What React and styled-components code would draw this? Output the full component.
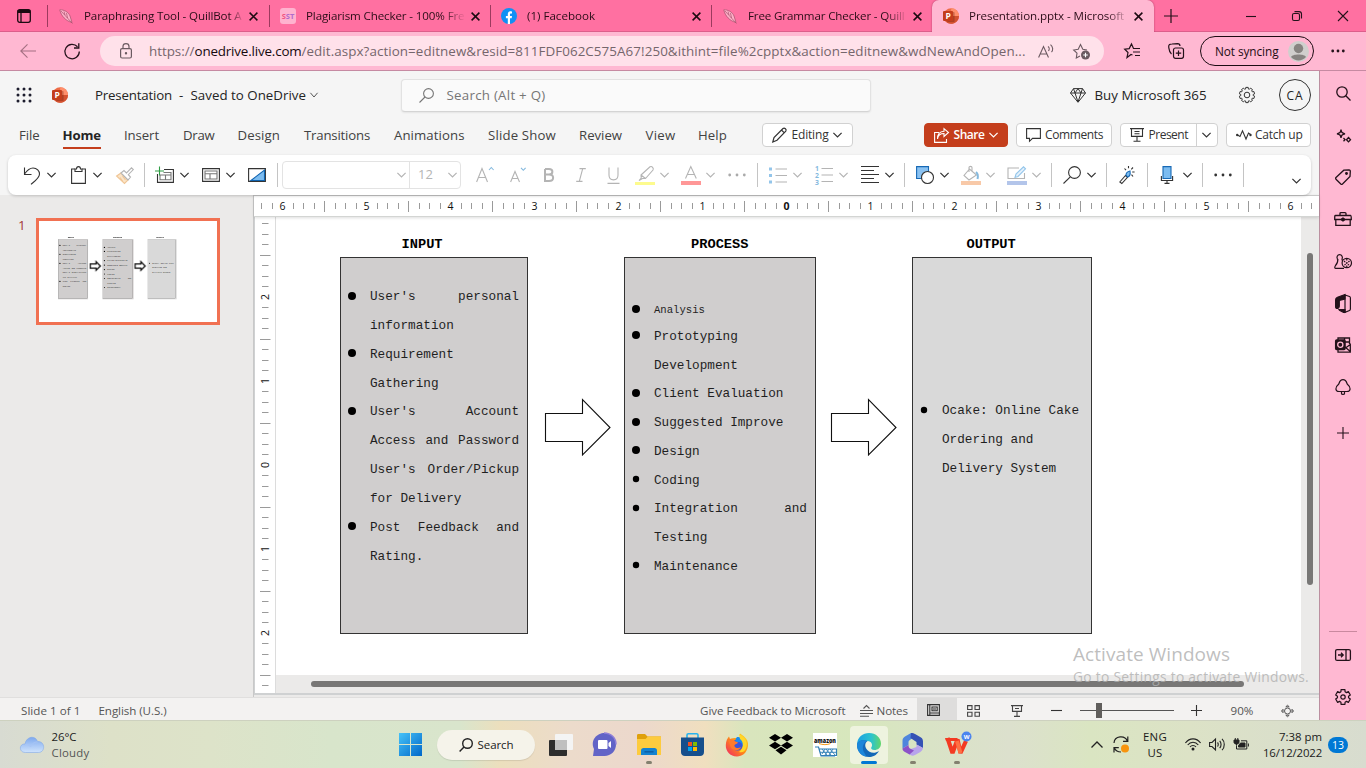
import React from "react";
import styled, { createGlobalStyle } from "styled-components";

const FAMILY = '"Open Sans", "Noto Sans", sans-serif';

const Global = createGlobalStyle`
  * { box-sizing: border-box; }
  body { margin: 0; overflow: hidden; font-family: ${FAMILY}; color: #242424; }
  svg { display: block; flex: none; overflow: visible; }
`;

/* ---------- text with a fixed run width ---------- */
const ctx = document.createElement("canvas").getContext("2d");
const tracking = (text, size, weight, width) => {
  ctx.font = `${weight} ${size}px ${FAMILY}`;
  return (width - ctx.measureText(text).width) / text.length;
};

const Run = styled.span`
  display: block;
  flex: none;
  white-space: pre;
  font-size: ${(p) => p.$size}px;
  font-weight: ${(p) => p.$weight};
  color: ${(p) => p.$color || "inherit"};
  letter-spacing: ${(p) => p.$track}px;
  width: ${(p) => p.$width}px;
  margin-left: ${(p) => p.$ml || 0}px;
  line-height: 1.36;
`;

function Label({ children, w, size = 12.8, weight = 400, color, ml }) {
  return (
    <Run $size={size} $weight={weight} $color={color} $ml={ml} $width={w} $track={tracking(children, size, weight, w)}>
      {children}
    </Run>
  );
}

/* ---------- shared pieces ---------- */
const Slot = styled.div`
  flex: none;
  display: flex;
  align-items: center;
  justify-content: center;
  width: ${(p) => p.$w}px;
  margin-left: ${(p) => p.$ml || 0}px;
  margin-top: ${(p) => p.$mt || 0}px;
`;

const Spacer = styled.div`
  flex: 1;
`;

function Icon({ w = 18, h, s = "#333", sw = 1.1, f = "none", children, ...rest }) {
  return (
    <svg width={w} height={h || w} viewBox={`0 0 ${w} ${h || w}`} fill={f} stroke={s} strokeWidth={sw} {...rest}>
      {children}
    </svg>
  );
}

const Chevron = ({ c = "#333", w = 9, sw = 1.2 }) => (
  <Icon w={w} h={6} s={c} sw={sw}>
    <path d={`M.4 .8 L${w / 2} 5 L${w - 0.4} .8`} />
  </Icon>
);

const PowerPoint = () => (
  <svg width="16" height="16" viewBox="0 0 16 16">
    <circle cx="8.2" cy="8" r="7.8" fill="#ed6c47" />
    <path d="M8.2 .2 A7.8 7.8 0 0 1 16 8 H8.2Z" fill="#ff8f6b" />
    <path d="M16 8 A7.8 7.8 0 0 1 .8 10.5 L8.2 8Z" fill="#d35230" />
    <rect x="4" y="4" width="7.6" height="10" rx="1" fill="#6e1f0d" opacity=".35" />
    <rect x="0" y="3" width="10" height="10" rx="1" fill="#c43e1c" />
    <text x="2.6" y="11" fontSize="8.5" fontWeight="700" fill="#fff" fontFamily="Open Sans, sans-serif">P</text>
  </svg>
);

const Feather = () => (
  <Icon w={15} h={15} s="#a5506c" sw={0.7} f="#ffb0c8">
    <path d="M.8 .8 C5 .6 9.500 3 11 7 L13 13.500 C7 12 2 7 .8 .8Z" />
    <path d="M2 2 L13.500 14.500 M5 2.500 L6 6 M7.500 4 L8.500 9" fill="none" />
  </Icon>
);

const Facebook = () => (
  <svg width="16" height="16" viewBox="0 0 16 16">
    <circle cx="8" cy="8" r="8" fill="#1090f5" />
    <path d="M6.800 16 V10.300 H4.900 V8 H6.800 V6.400 C6.800 4.300 8 3.300 9.700 3.300 L11 3.400 V5.400 H10 C9.200 5.400 9 5.900 9 6.500 V8 H11 L10.700 10.300 H9 V16Z" fill="#fff" />
  </svg>
);

const SstBox = styled.div`
  width: 16px;
  height: 16px;
  border-radius: 3px;
  background: #ffb3cf;
  color: #f0567f;
  font-size: 7.5px;
  font-weight: 700;
  line-height: 16px;
  text-align: center;
  span { color: #b06ccb; }
`;

/* ---------- browser chrome ---------- */
const Page = styled.div`
  width: 1366px;
  height: 768px;
  display: flex;
  flex-direction: column;
  overflow: hidden;
`;

const TabBar = styled.div`
  height: 32px;
  flex: none;
  display: flex;
  align-items: stretch;
  background: #ff70a1;
  border-bottom: 1px solid #dc5f8b;
`;

const Workspaces = styled.div`
  width: 47px;
  flex: none;
  display: flex;
  align-items: center;
  padding-left: 17px;
`;

const TabBox = styled.div`
  width: ${(p) => p.$w || 221}px;
  flex: none;
  display: flex;
  align-items: center;
  padding-left: ${(p) => (p.$active ? 11 : 10)}px;
  height: 32px;
  border-left: ${(p) => (p.$active ? 0 : 1)}px solid transparent;
  border-image: ${(p) => (p.$active ? "none" : "linear-gradient(#0000 6px, #9c3a5e 6px, #9c3a5e 26px, #0000 26px) 1")};
  background: ${(p) => (p.$active ? "#ffb8d2" : "transparent")};
  border-radius: ${(p) => (p.$active ? "7px 7px 0 0" : 0)};
  box-shadow: ${(p) => (p.$active ? "0 0 2px #a83b62" : "none")};
  color: #2b0d18;
`;

const TabTitle = styled.div`
  width: ${(p) => p.$w}px;
  flex: none;
  margin-left: 10px;
  overflow: hidden;
  mask-image: linear-gradient(90deg, #000 ${(p) => p.$fade}px, transparent 160px);
`;

const CloseX = () => (
  <Icon w={9} s="#1c0a11" sw={1.5}>
    <path d="M.6 .6 L8.400 8.400 M8.400 .6 L.6 8.400" />
  </Icon>
);

function Tab({ icon, title, w, active, boxWidth = 221, fade = 138 }) {
  return (
    <TabBox $active={active} $w={boxWidth}>
      <Slot $w={16}>{icon}</Slot>
      <TabTitle $fade={fade} $w={159}>
        <Label w={w} size={11.6}>{title}</Label>
      </TabTitle>
      <Slot $w={9} $ml={6}><CloseX /></Slot>
    </TabBox>
  );
}

const AddressBar = styled.div`
  height: 39px;
  flex: none;
  display: flex;
  align-items: center;
  background: #ffb8d2;
  border-bottom: 1px solid #c68aa2;
`;

const UrlField = styled.div`
  width: 1004px;
  height: 30px;
  margin-left: 20px;
  border-radius: 15px;
  background: #ffe1ea;
  display: flex;
  align-items: center;
  padding-left: 20px;
  color: #75666c;
`;

const Profile = styled.div`
  width: 114px;
  height: 30px;
  margin-left: 16px;
  border: 1.3px solid #1d0c13;
  border-radius: 15px;
  display: flex;
  align-items: center;
  padding-left: 14px;
`;

/* ---------- office shell ---------- */
const Body = styled.div`
  flex: 1;
  display: flex;
  min-height: 0;
`;

const Office = styled.div`
  width: 1320px;
  flex: none;
  display: flex;
  flex-direction: column;
  background: #f5f5f5;
  border-right: 1px solid #bb8fa0;
`;

const Header = styled.div`
  height: 48px;
  flex: none;
  display: flex;
  align-items: center;
`;

const SearchBox = styled.div`
  width: 470px;
  height: 33px;
  flex: none;
  margin-left: 83px;
  border: 1px solid #e2e2e2;
  border-bottom-color: #d4d4d4;
  border-radius: 4px;
  background: #fafafa;
  display: flex;
  align-items: center;
  padding-left: 17px;
  color: #767676;
  box-shadow: 0 1px 2px #00000012;
`;

const Avatar = styled.div`
  width: 32px;
  height: 32px;
  margin-left: 24px;
  border: 1px solid #333;
  border-radius: 50%;
  display: flex;
  align-items: center;
  justify-content: center;
  padding-top: 2px;
`;

const MenuRow = styled.div`
  height: 32px;
  flex: none;
  display: flex;
  align-items: center;
  color: #424242;
`;

const MenuItem = styled.div`
  margin-left: ${(p) => p.$ml}px;
  padding: 6px 0 3px;
  border-bottom: 2px solid ${(p) => (p.$on ? "#c43e1c" : "transparent")};
  color: ${(p) => (p.$on ? "#242424" : "inherit")};
`;

const PillButton = styled.div`
  width: ${(p) => p.$w}px;
  height: 24px;
  flex: none;
  margin-left: ${(p) => p.$ml}px;
  padding-left: 9px;
  display: flex;
  align-items: center;
  border: 1px solid ${(p) => (p.$primary ? "#c43e1c" : "#d1d1d1")};
  border-radius: 4px;
  background: ${(p) => (p.$primary ? "#c43e1c" : "#fff")};
  color: ${(p) => (p.$primary ? "#fff" : "#333")};
`;

const ButtonDivider = styled.div`
  width: 1px;
  height: 22px;
  background: #d1d1d1;
  margin-left: 8px;
`;

const Ribbon = styled.div`
  width: 1303px;
  height: 40px;
  flex: none;
  margin: 4px 0 0 8px;
  border-radius: 8px;
  background: #fff;
  box-shadow: 0 1px 3px #00000030;
  display: flex;
  align-items: center;
  position: relative;
  z-index: 2;
`;

const Divider = styled.div`
  width: 1px;
  height: 24px;
  flex: none;
  margin-left: ${(p) => p.$ml}px;
  background: #c4c4c4;
`;

const FontPicker = styled.div`
  width: 179px;
  height: 28px;
  margin-left: 4px;
  flex: none;
  border: 1px solid #e3e3e3;
  border-radius: 4px;
  display: flex;
  align-items: center;
  color: #b5b5b5;
`;

const FontName = styled.div`
  width: 127px;
  height: 26px;
  border-right: 1px solid #e3e3e3;
  display: flex;
  align-items: center;
  padding-left: 114px;
`;

/* ---------- editor ---------- */
const Editor = styled.div`
  flex: 1;
  min-height: 0;
  display: flex;
  background: #ebeae9;
`;

const ThumbPane = styled.div`
  width: 254px;
  flex: none;
  display: flex;
  align-items: flex-start;
  border-right: 1px solid #c8c8c8;
  color: #a4373a;
  padding: 21px 0 0 18px;
`;

const Thumb = styled.div`
  width: 184px;
  height: 107px;
  margin: 2px 0 0 10px;
  border: 3px solid #f17152;
  background: #fff;
  overflow: hidden;
  padding: 12px 0 0 9px;
`;

const Miniature = styled.div`
  width: 820px;
  transform: scale(0.1567);
  transform-origin: 0 0;
  svg { stroke-width: 8px; }
`;

const Workspace = styled.div`
  flex: 1;
  min-width: 0;
  display: flex;
  flex-direction: column;
`;

const TopRuler = styled.div`
  height: 22px;
  flex: none;
  background: #fff;
  border-top: 1px solid #c9c9c9;
  border-bottom: 1px solid #d3d5d3;
  overflow: hidden;
  position: relative;
  box-shadow: 0 1px 3px #00000022;
`;

const CanvasRow = styled.div`
  flex: 1;
  min-height: 0;
  display: flex;
  border-bottom: 2px solid #cfd1d2;
`;

const LeftRuler = styled.div`
  width: 22px;
  flex: none;
  background: #fff;
  border-left: 1px solid #cfd1d2;
  border-right: 1px solid #dcdcdc;
  overflow: hidden;
`;

const CanvasColumn = styled.div`
  flex: 1;
  min-width: 0;
`;

const Canvas = styled.div`
  width: 1025px;
  height: 458px;
  background: #fff;
  overflow: hidden;
`;

const HTrack = styled.div`
  padding: 6px 0 0 35px;
`;

const HThumb = styled.div`
  width: 933px;
  height: 6px;
  border-radius: 3px;
  background: #787776;
`;

const VTrack = styled.div`
  width: 18px;
  flex: none;
  padding: 36px 0 0 6px;
`;

const VThumb = styled.div`
  width: 6px;
  height: 332px;
  border-radius: 3px;
  background: #787776;
`;

const CanvasSplit = styled.div`
  display: flex;
  flex: 1;
`;

/* ---------- slide ---------- */
const SlideArea = styled.div`
  position: relative;
  width: 820px;
  height: 458px;
  font-family: "Liberation Mono", monospace;
`;

const Caption = styled.div`
  position: absolute;
  left: ${(p) => p.$x}px;
  top: 20px;
  font: bold 13.7px/15px "Liberation Mono", monospace;
  color: #000;
`;

const Panel = styled.div`
  position: absolute;
  left: ${(p) => p.$x}px;
  top: 40px;
  width: ${(p) => p.$w}px;
  height: 377px;
  padding-top: ${(p) => p.$pt}px;
  border: 1px solid #333;
  background: ${(p) => p.$bg || "#d0cece"};
`;

const Line = styled.div`
  height: ${(p) => p.$h || 28.85}px;
  display: flex;
  align-items: center;
  font-size: ${(p) => p.$size || 12.7}px;
  color: #1f1f1f;
`;

const Bullet = styled.span`
  width: 8px;
  height: 8px;
  margin: 0 14px 2px 7px;
  flex: none;
  border-radius: 50%;
  background: ${(p) => (p.$on ? "#000" : "transparent")};
  transform: scale(${(p) => (p.$small ? 0.8 : 1)});
`;

const Words = styled.span`
  width: ${(p) => p.$w}px;
  white-space: nowrap;
  text-align-last: ${(p) => (p.$wide ? "justify" : "left")};
`;

const BlockArrow = styled.svg`
  position: absolute;
  left: ${(p) => p.$x}px;
  top: 181px;
  stroke-width: 1.1px;
`;

const INPUT = [
  ["User's personal", 1, 1], ["information"], ["Requirement", 1], ["Gathering"], ["User's Account", 1, 1],
  ["Access and Password", 0, 1], ["User's Order/Pickup", 0, 1], ["for Delivery"], ["Post Feedback and", 1, 1], ["Rating."],
];
const PROCESS = [
  ["Analysis", 1, 0, 24.2, 10.6], ["Prototyping", 1], ["Development"], ["Client Evaluation", 1], ["Suggested Improve", 1],
  ["Design", 1], ["Coding", 2], ["Integration and", 2, 1], ["Testing"], ["Maintenance", 2],
];
const OUTPUT = [["Ocake: Online Cake", 2], ["Ordering and"], ["Delivery System"]];

function Lines({ rows, w, step }) {
  return rows.map(([text, dot, wide, h, size]) => (
    <Line key={text} $h={h || step} $size={size}>
      <Bullet $on={!!dot} $small={dot === 2} />
      <Words $w={w} $wide={wide}>{text}</Words>
    </Line>
  ));
}

function Slide() {
  return (
    <SlideArea>
      <Caption $x={125.5}>INPUT</Caption>
      <Caption $x={415}>PROCESS</Caption>
      <Caption $x={690.5}>OUTPUT</Caption>
      <Panel $x={64} $w={188} $pt={24.1}><Lines rows={INPUT} w={149} step={28.87} /></Panel>
      <Panel $x={348} $w={192} $pt={39.8}><Lines rows={PROCESS} w={153} step={28.75} /></Panel>
      <Panel $x={636} $w={180} $pt={138.4} $bg="#d9d9d9"><Lines rows={OUTPUT} w={140} /></Panel>
      {[269, 555].map((x) => (
        <BlockArrow key={x} $x={x} width="66" height="58" viewBox="0 0 66 58" fill="#fff" stroke="#111">
          <path d="M.5 15.500 H37.500 V1.500 L65 29.500 L37.500 57 V43.500 H.5Z" />
        </BlockArrow>
      ))}
    </SlideArea>
  );
}

/* ---------- rulers ---------- */
function HorizontalRuler() {
  const marks = [];
  for (let i = -50; i <= 50; i++) {
    const x = 532.5 + i * 10.5;
    if (x < 4 || x > 1064) continue;
    if (i % 8 === 0) marks.push(<text key={i} x={x - 0.1} y="14" textAnchor="middle" fontSize="10.500" fontWeight={i === 0 ? 700 : 500} fill="#111">{Math.abs(i / 8)}</text>);
    else marks.push(<path key={i} d={i % 4 === 0 ? `M${Math.floor(x) + 0.5} 5 V16` : `M${Math.floor(x) + 0.5} 7 V13`} stroke="#9a9a9a" />);
  }
  return <svg width="1065" height="20">{marks}</svg>;
}

function VerticalRuler() {
  const marks = [];
  for (let i = -23; i <= 21; i++) {
    const y = 248 + i * 10.5;
    if (y < 4) continue;
    if (i % 8 === 0) marks.push(<text key={i} transform={`translate(14 ${y}) rotate(-90)`} textAnchor="middle" fontSize="10.500" fontWeight="500" fill="#111">{Math.abs(i / 8)}</text>);
    else marks.push(<path key={i} d={i % 4 === 0 ? `M5 ${Math.floor(y) + 0.5} H15.500` : `M7 ${Math.floor(y) + 0.5} H13.500`} stroke="#9a9a9a" />);
  }
  return <svg width="20" height="476">{marks}</svg>;
}

/* ---------- status bar ---------- */
const StatusBar = styled.div`
  height: 23px;
  flex: none;
  display: flex;
  align-items: center;
  padding-top: 3px;
  background: #f3f2f1;
  border-top: 1px solid #e0dfde;
  color: #555;
  position: relative;
  z-index: 1;
`;

const ViewButton = styled.div`
  width: 40px;
  height: 22px;
  flex: none;
  margin: -3px 0 0 9px;
  background: #dedddc;
  display: flex;
  align-items: center;
  justify-content: center;
  padding: 2px 8px 0 0;
`;

const EditorGap = styled.div`
  height: 2px;
  background: #ebeae9;
`;

/* ---------- browser sidebar ---------- */
const SideBar = styled.div`
  width: 46px;
  flex: none;
  background: #ffb8d2;
  display: flex;
  flex-direction: column;
  align-items: center;
  padding-top: 1px;
`;

const SideSlot = styled.div`
  width: 28px;
  height: 42px;
  display: flex;
  align-items: center;
  justify-content: center;
`;

const SideRule = styled.div`
  width: 28px;
  height: 1px;
  background: #c9899f;
`;

/* ---------- windows taskbar ---------- */
const TaskBar = styled.div`
  height: 48px;
  flex: none;
  display: flex;
  align-items: center;
  border-top: 1px solid #cdd1bf;
  background: linear-gradient(90deg, #d8dbd2 0, #dde1c8 110px, #dde3c9 210px, #d8e5cb 330px, #d9e5cc 460px, #ecdfbd 500px, #ecdbcb 570px, #ecd8cc 640px, #f0dfbf 705px, #d9e5bd 745px, #d7e7bd 860px, #d9e3c6 930px, #dce0cd 1010px, #dae5c2 1090px, #dce2c6 1190px, #d8dccf 1366px);
  position: relative;
`;

const SearchPill = styled.div`
  width: 98px;
  height: 30px;
  margin-left: 14px;
  border-radius: 15px;
  background: #f5f3ea;
  box-shadow: 0 1px 1px #0000001a;
  display: flex;
  align-items: center;
  padding-left: 22px;
  color: #1a1a1a;
`;

const TaskApp = styled.div`
  width: 38px;
  height: 38px;
  flex: none;
  margin-left: ${(p) => p.$ml || 6}px;
  border-radius: 4px;
  background: ${(p) => (p.$active ? "#eef3df" : "transparent")};
  display: flex;
  align-items: center;
  justify-content: center;
  position: relative;
  &::after {
    content: "";
    position: absolute;
    bottom: 0;
    width: ${(p) => (p.$active ? 16 : 6)}px;
    height: 3px;
    border-radius: 2px;
    background: ${(p) => (p.$active ? "#0078d4" : p.$open ? "#83806f" : "transparent")};
  }
`;

const Stack = styled.div`
  width: ${(p) => p.$w}px;
  margin-left: ${(p) => p.$ml}px;
  flex: none;
  display: flex;
  flex-direction: column;
  align-items: ${(p) => p.$align || "flex-start"};
  color: #1b1b1b;
`;

const Badge = styled.div`
  width: 20px;
  height: 16px;
  margin-left: 6px;
  border-radius: 8px;
  background: #0078d4;
  color: #fff;
  font-size: 10.5px;
  line-height: 16px;
  text-align: center;
`;

const Watermark = styled.div`
  position: absolute;
  left: 1073px;
  top: 642px;
  z-index: 5;
  color: #b0b0b0d0;
  pointer-events: none;
`;

const Dots = ({ c = "#333", w = 17 }) => (
  <Icon w={w} h={4} s="none" f={c}>
    <circle cx="1.700" cy="2" r="1.400" /><circle cx={w / 2} cy="2" r="1.400" /><circle cx={w - 1.7} cy="2" r="1.400" />
  </Icon>
);

function RibbonBar() {
  const g = "#b4b4b4";
  return (
    <Ribbon>
      <Slot $w={18} $ml={15}><Icon h={19}><path d="M1.500 1.500 V8.500 H8.500 M1.500 8 C4 4.500 6 2 10 2 C14 2 16.500 5 16.500 8 C16.500 12 12 15 8 18.300" /></Icon></Slot>
      <Slot $w={9} $ml={6}><Chevron /></Slot>
      <Slot $w={15} $ml={15}><Icon w={15} h={18}><path d="M4 3 H.6 V17.400 H14.400 V3 H11" /><path d="M4 5.500 V3 H5.500 C5.500 -.2 9.500 -.2 9.500 3 H11 V5.500Z" /></Icon></Slot>
      <Slot $w={9} $ml={7}><Chevron /></Slot>
      <Slot $w={18} $ml={14}>
        <Icon h={17} s={g}>
          <path d="M.6 9 L5 6 L12 13 L8.500 16.400Z" fill="#fbe5c8" stroke="#f0c595" /><path d="M4 10.500 L6.500 14 M6.500 9 L9.500 13" stroke="#f0c595" />
          <path d="M5 6 L8 3.500 L10.500 6 L15.500 .8 L17.300 2.600 L12.300 7.700 L14.500 10 L12 13Z" fill="#fff" />
        </Icon>
      </Slot>
      <Divider $ml={10} />
      <Slot $w={19} $ml={10}><Icon w={19} h={16}><path d="M9 2.500 H18.400 V15.400 H2.500 V7" /><path d="M8.500 5.500 H16 V12.800 H5 V8 M5 8 H16 M10.500 8 V12.800" stroke="#777" /><path d="M4.500 -.5 V8.500 M0 4 H9" stroke="#2f9e44" /></Icon></Slot>
      <Slot $w={9} $ml={6}><Chevron /></Slot>
      <Slot $w={18} $ml={13}><Icon h={14}><path d="M.6 .6 H17.400 V13.400 H.6Z" /><path d="M3 3 H15 V11 H3Z M3 5.700 H15 M8 5.700 V11" stroke="#777" /></Icon></Slot>
      <Slot $w={9} $ml={6}><Chevron /></Slot>
      <Slot $w={18} $ml={13}><Icon h={14}><path d="M.6 .6 H17.400 V13.400 H.6Z" /><path d="M3 12.500 L16.500 2 V12.500Z" fill="#7cbcf0" stroke="#0f63b0" /></Icon></Slot>
      <Divider $ml={11} />
      <FontPicker>
        <FontName><Chevron c={g} /></FontName>
        <Label w={15} ml={8} size={13}>12</Label>
        <Slot $w={9} $ml={15}><Chevron c={g} /></Slot>
      </FontPicker>
      <Slot $w={18} $ml={15}><Icon h={16} s={g}><path d="M.6 15 L6 1.500 L11.500 15 M2.300 10.500 H9.800" /><path d="M13 3 L15.300 .5 L17.600 3" stroke="#84b9de" /></Icon></Slot>
      <Slot $w={17} $ml={16}><Icon w={17} h={16} s={g}><path d="M.6 15 L5 4.500 L9.500 15 M2.300 11.500 H8" /><path d="M11 .8 L13.300 3.300 L15.600 .8" stroke="#84b9de" /></Icon></Slot>
      <Slot $w={12} $ml={16}><Icon w={12} h={14} s={g} sw={2}><path d="M2 1 H6 C10.500 1 10.500 6.500 6 6.500 H2 M6 6.500 C11.500 6.500 11.500 13 6 13 H2 V1" /></Icon></Slot>
      <Slot $w={10} $ml={21}><Icon w={10} h={14} s={g}><path d="M3.500 .6 H9.800 M.2 13.400 H6.500 M6.700 .6 L3.300 13.400" /></Icon></Slot>
      <Slot $w={13} $ml={21}><Icon w={13} h={17} s={g}><path d="M2 .4 V8 C2 14.500 11 14.500 11 8 V.4 M.5 16.400 H12.500" /></Icon></Slot>
      <Slot $w={20} $ml={15}><Icon w={20} h={19} s={g}><path d="M6 9 L15 .8 C17 -.2 19 2 18 4 L10.500 12.500 H7.500 L4 14.500 L6.200 12Z M6 9 L10.500 12.500" /><path d="M0 17.500 H20" stroke="#fdfb8e" strokeWidth="3" /></Icon></Slot>
      <Slot $w={9} $ml={5}><Chevron c={g} /></Slot>
      <Slot $w={20} $ml={12}><Icon w={20} h={19} s={g}><path d="M4.500 12.500 L9.800 .6 L15.300 12.500 M6.300 8.500 H13.500" /><path d="M0 17 H20" stroke="#ff9797" strokeWidth="4" /></Icon></Slot>
      <Slot $w={9} $ml={5}><Chevron c={g} /></Slot>
      <Slot $w={18} $ml={13}><Dots c="#aaa" w={18} /></Slot>
      <Divider $ml={11} />
      <Slot $w={18} $ml={11}><Icon h={17} s={g}><path d="M6.500 2 H18 M6.500 8.500 H18 M6.500 15 H18" /><path d="M0 2 H3 M0 8.500 H3 M0 15 H3" stroke="#93c5ea" strokeWidth="3" /></Icon></Slot>
      <Slot $w={9} $ml={6}><Chevron c={g} /></Slot>
      <Slot $w={18} $ml={13}>
        <Icon h={18} s={g}><path d="M6.500 2.500 H18 M6.500 9 H18 M6.500 15.500 H18" />
          <g fill="#84b9de" stroke="none" fontSize="6.800" fontWeight="700"><text x="0" y="4.500">1</text><text x="0" y="11.500">2</text><text x="0" y="18.500">3</text></g></Icon>
      </Slot>
      <Slot $w={9} $ml={6}><Chevron c={g} /></Slot>
      <Slot $w={18} $ml={13}><Icon h={18}><path d="M0 .5 H18 M0 4.500 H13 M0 8.500 H18 M0 12.500 H13 M0 16.500 H18" /></Icon></Slot>
      <Slot $w={9} $ml={6}><Chevron /></Slot>
      <Divider $ml={10} />
      <Slot $w={18} $ml={11}><Icon h={18}><path d="M.6 .6 H12.500 V12.500 H.6Z" fill="#8ac2f2" stroke="#1769b5" /><circle cx="11.500" cy="11.500" r="6" fill="#fff" /></Icon></Slot>
      <Slot $w={9} $ml={6}><Chevron /></Slot>
      <Slot $w={20} $ml={12}><Icon w={20} h={19} s={g}><path d="M8.500 3 L3 9.500 L8 14 L15.500 9 L8.500 3Z M8 6 V1.500 C8 0 11 0 11 1.500 V5" /><path d="M15 6 C17.500 8 17 11 16.500 13" stroke="#84b9de" strokeWidth="2" /><path d="M0 17 H20" stroke="#f8c9a8" strokeWidth="4" /></Icon></Slot>
      <Slot $w={9} $ml={5}><Chevron c={g} /></Slot>
      <Slot $w={20} $ml={12}><Icon w={20} h={19} s={g}><path d="M17.500 7 V12.500 H1 V2 H12" /><path d="M8 11.500 L9 8 L16.500 .8 L18.500 2.800 L11 10.500Z" fill="#e4f1fc" stroke="#93c5ea" /><path d="M0 17 H20" stroke="#b3c5ea" strokeWidth="4" /></Icon></Slot>
      <Slot $w={9} $ml={5}><Chevron c={g} /></Slot>
      <Divider $ml={10} />
      <Slot $w={18} $ml={11}><Icon><circle cx="11.500" cy="6.500" r="5.900" /><path d="M7.300 10.800 L.5 17.500" /></Icon></Slot>
      <Slot $w={9} $ml={6}><Chevron /></Slot>
      <Divider $ml={10} />
      <Slot $w={16} $ml={11.5}><Icon w={16} h={18}><path d="M.8 16 L6.500 9.500 L8.500 11.300 L2.800 17.500Z" /><path d="M7 9 C7 6 9 5.500 11 5 C11.500 8 11 10.500 8.500 11Z" fill="#7cbcf0" stroke="#1769b5" /><path d="M5.500 2.500 L7 4.200 M9.500 0 V2.300 M14 1.500 L12.300 3.300 M13.200 6 H15.600 M12.500 8.700 L14 10.500" /></Icon></Slot>
      <Divider $ml={12.5} />
      <Slot $w={12} $ml={13}><Icon w={12} h={18}><path d="M2 .6 H10 V12.500 H2Z" fill="#7cbcf0" stroke="#1769b5" /><path d="M.4 10 V14.500 H11.600 V10 M6 14.500 V17.500 M3.500 17.400 H8.500" /></Icon></Slot>
      <Slot $w={9} $ml={10}><Chevron /></Slot>
      <Divider $ml={10} />
      <Slot $w={18} $ml={11}><Dots w={18} /></Slot>
      <Divider $ml={11} />
      <Slot $w={9} $ml={48} $mt={12}><Chevron /></Slot>
    </Ribbon>
  );
}

const MENU = [
  ["File", 19, 20.5], ["Home", 23, 38.5, true], ["Insert", 23, 35], ["Draw", 24, 31.5], ["Design", 23, 42.5],
  ["Transitions", 24, 66], ["Animations", 24, 70.5], ["Slide Show", 23.5, 68], ["Review", 23, 43], ["View", 23.5, 30], ["Help", 22.5, 29],
];

const GearPath = ({ n = 8, R, r, c }) => {
  let d = "";
  for (let i = 0; i < n; i++) {
    const a = (i / n) * 2 * Math.PI - Math.PI / 2;
    const st = Math.PI / n;
    const pts = [[a - st * 0.5, R], [a + st * 0.5, R], [a + st * 0.72, r], [a + st * 1.28, r]];
    pts.forEach(([t, q], j) => { d += `${i || j ? "L" : "M"}${(c + q * Math.cos(t)).toFixed(2)} ${(c + q * Math.sin(t)).toFixed(2)} `; });
  }
  return <path d={d + "Z"} strokeLinejoin="round" />;
};

const k = "#24111a";

export default function App() {
  return (
    <Page>
      <Global />
      <TabBar>
        <Workspaces>
          <Icon w={14} h={14} s="#1c0a11" sw={1.3}><rect x=".7" y=".7" width="12.600" height="12.600" rx="2" /><path d="M.7 2.500 H13.300" strokeWidth="3" /><path d="M4 3 V13" /></Icon>
        </Workspaces>
        <Tab icon={<Feather />} title="Paraphrasing Tool - QuillBot A" w={157.5} fade={145} boxWidth={222} />
        <Tab icon={<SstBox>S<span>ST</span></SstBox>} title="Plagiarism Checker - 100% Fre" w={158.5} fade={136} />
        <Tab icon={<Facebook />} title="(1) Facebook" w={68} />
        <Tab icon={<Feather />} title="Free Grammar Checker - Quill" w={156.5} />
        <Tab icon={<PowerPoint />} title="Presentation.pptx - Microsoft" w={155} active boxWidth={222} />
        <Slot $w={14} $ml={10}><Icon w={14} s={k} sw={1.2}><path d="M7 0 V14 M0 7 H14" /></Icon></Slot>
        <Slot $w={10} $ml={68}><Icon w={10} h={10} s={k}><path d="M0 5.500 H10" /></Icon></Slot>
        <Slot $w={10} $ml={36}><Icon w={10} h={10} s={k}><rect x=".5" y="2.500" width="7" height="7" rx="1.500" /><path d="M2.500 .6 H7 C8.500 .6 9.500 1.600 9.500 3 V7.500" /></Icon></Slot>
        <Slot $w={10} $ml={36}><Icon w={10} h={10} s={k}><path d="M0 0 L10 10 M10 0 L0 10" /></Icon></Slot>
      </TabBar>
      <AddressBar>
        <Slot $w={16} $ml={20}><Icon w={16} h={14} s="#a46f82"><path d="M16 7 H.8 M7.500 .4 L.8 7 L7.500 13.600" /></Icon></Slot>
        <Slot $w={16} $ml={28}><Icon w={16} h={17} s={k} sw={1.3}><path d="M15.300 8.500 A7.200 7.200 0 1 1 13.500 3.800 M14.800 .3 V5 H10" /></Icon></Slot>
        <UrlField>
          <Icon w={12} h={16} s="#6b5a61" sw={1.2}><rect x=".6" y="5.600" width="10.800" height="9.400" rx="1.500" /><path d="M3 5.500 V3.500 C3 -.3 9 -.3 9 3.500 V5.500" /><circle cx="6" cy="10.300" r=".6" fill="#6b5a61" /></Icon>
          <Label w={45.5} size={13.4} ml={17}>https://</Label>
          <Label w={107} size={13.4} color="#150a0e">onedrive.live.com</Label>
          <Label w={724} size={13.4}>/edit.aspx?action=editnew&amp;resid=811FDF062C575A67!250&amp;ithint=file%2cpptx&amp;action=editnew&amp;wdNewAndOpen...</Label>
          <Slot $w={16} $ml={12}><Icon w={16} h={15} s="#6b5a61"><path d="M.6 13.500 L5.500 2.500 L10.500 13.500 M2.300 10 H9 M10 2.500 C11.500 3.500 11.500 5.500 10.500 7 M12.500 .6 C15.500 3 15 6.500 13.500 8" /></Icon></Slot>
          <Slot $w={17} $ml={19}><Icon w={17} h={17} s="#6b5a61"><path d="M7 13 L3.300 15 L4 10.200 L.7 7 L5.200 6.300 L7.500 1.500 L9.800 6.300 L14 7" /><circle cx="12.500" cy="12" r="4.500" fill="#6b5a61" stroke="none" /><path d="M12.500 9.700 V14.300 M10.200 12 H14.800" stroke="#fff" /></Icon></Slot>
        </UrlField>
        <Slot $w={17} $ml={20}><Icon w={17} h={16} s={k} sw={1.2}><path d="M8.500 12 L7 11.500 L3 14.500 L4 9.500 L.7 6.200 L5.200 5.600 L7.500 .9 L9.500 5.500 H16 M9 9 H16 M11 12.500 H16" /></Icon></Slot>
        <Slot $w={16} $ml={27}><Icon w={16} h={16} s={k} sw={1.2}><rect x="5.500" y="5" width="10" height="10.300" rx="2" /><path d="M10.500 7.500 V13 M7.800 10.200 H13.200 M3.500 11 C1 9 1 6 .7 4 C.5 1.500 2 1 4 1 L9.500 .7 C11.500 .7 12 2 12 3" /></Icon></Slot>
        <Profile>
          <Label w={63.5} size={11.8} color="#1d0c13">Not syncing</Label>
          <Slot $w={21} $ml={9.5}><svg width="21" height="21" viewBox="0 0 21 21"><circle cx="10.500" cy="10.500" r="10.500" fill="#d0cfcd" /><circle cx="10.500" cy="7.500" r="4.700" fill="#878481" /><path d="M3 16 C4 12.500 17 12.500 18 16 C14 20.500 7 20.500 3 16Z" fill="#878481" /></svg></Slot>
        </Profile>
        <Slot $w={14} $ml={17}><Dots c={k} w={14} /></Slot>
      </AddressBar>

      <Body>
        <Office>
          <Header>
            <Slot $w={16} $ml={15.5}><Icon w={16} s="none" f="#1d1d2e">{[2, 8, 14].map((y) => [2, 8, 14].map((x) => <circle key={`${x}-${y}`} cx={x} cy={y} r="1.500" />))}</Icon></Slot>
            <Slot $w={16} $ml={20.5}><PowerPoint /></Slot>
            <Label w={77} size={13.3} ml={27}>Presentation</Label>
            <Label w={5} size={13.3} ml={7}>-</Label>
            <Label w={115.5} size={13.3} ml={6.500}>Saved to OneDrive</Label>
            <Slot $w={8} $ml={3.5}><Chevron w={8} sw={1} c="#555" /></Slot>
            <SearchBox>
              <Icon w={15} h={15} s="#767676"><circle cx="9.500" cy="5.500" r="4.900" /><path d="M6 9 L.5 14.500" /></Icon>
              <Label w={99} size={13.3} ml={13}>Search (Alt + Q)</Label>
            </SearchBox>
            <Slot $w={16} $ml={199.5}><Icon w={16} h={15} sw={1}><path d="M3.500 .6 H12.500 L15.500 5 L8 14.300 L.5 5Z M.5 5 H15.500 M8 .6 L5 5 L8 14 L11 5Z M3.500 .6 L5 5 M12.500 .6 L11 5" /></Icon></Slot>
            <Label w={112} size={13.3} ml={8.500}>Buy Microsoft 365</Label>
            <Slot $w={16} $ml={32.500}><Icon w={16} sw={1}><GearPath n={10} R={7.7} r={6.2} c={8} /><circle cx="8" cy="8" r="2.800" /></Icon></Slot>
            <Avatar><Label w={17} size={12}>CA</Label></Avatar>
          </Header>
          <MenuRow>
            {MENU.map(([t, ml, w, on]) => (
              <MenuItem key={t} $ml={ml} $on={on}><Label w={w} size={13.2} weight={on ? 700 : 400}>{t}</Label></MenuItem>
            ))}
            <PillButton $w={91} $ml={35}>
              <Icon w={15} h={16} sw={1.2}><path d="M.8 15 L2 10.500 L11 1.500 C12.500 .2 15 2.500 13.800 4.200 L5 13.200Z M9.500 3 L12.300 5.800" /></Icon>
              <Label w={37} size={12} ml={4.5}>Editing</Label>
              <Slot $w={9} $ml={4}><Chevron /></Slot>
            </PillButton>
            <PillButton $w={84} $ml={71} $primary>
              <Icon w={15} h={15} s="#fff"><path d="M5 4.500 H.6 V14.400 H12.500 V11 M3.500 11 C4 7.500 6 5.500 10 5.500 V8.500 L14.500 4.500 L10 .6 V3.300 C5.500 3.500 3.500 7 3.500 11Z" /></Icon>
              <Label w={31} size={12} weight={600} ml={4.5}>Share</Label>
              <Slot $w={9} $ml={4}><Chevron c="#fff" /></Slot>
            </PillButton>
            <PillButton $w={96} $ml={8}>
              <Icon w={15} h={14}><path d="M.6 .6 H14.400 V10.400 H6.500 L3.500 13.300 V10.400 H.6Z" /></Icon>
              <Label w={58} size={12} ml={4}>Comments</Label>
            </PillButton>
            <PillButton $w={98} $ml={8}>
              <Icon w={14} h={14}><path d="M0 .6 H14 M1.500 .6 V8.400 H12.500 V.6 M4.500 3.500 H9.500 M4.500 5.800 H9.500 M7 8.500 V13 M3.500 13.300 H10.500" /></Icon>
              <Label w={39.5} size={12} ml={4.5}>Present</Label>
              <ButtonDivider />
              <Slot $w={9} $ml={5}><Chevron /></Slot>
            </PillButton>
            <PillButton $w={85} $ml={8}>
              <Icon w={16} h={10}><path d="M1.500 5 L4 6.500 L6.500 .8 L10 9 L12.500 3 L14.500 4.500" /><circle cx="1.200" cy="5" r="1.200" fill="#333" stroke="none" /><circle cx="14.500" cy="5" r="1.200" fill="#333" stroke="none" /></Icon>
              <Label w={47.5} size={12} ml={3}>Catch up</Label>
            </PillButton>
          </MenuRow>
          <RibbonBar />
          <Editor>
            <ThumbPane>
              <Label w={8} size={13.3}>1</Label>
              <Thumb><Miniature><Slide /></Miniature></Thumb>
            </ThumbPane>
            <Workspace>
              <TopRuler><HorizontalRuler /></TopRuler>
              <CanvasRow>
                <LeftRuler><VerticalRuler /></LeftRuler>
                <CanvasSplit>
                  <CanvasColumn>
                    <Canvas><Slide /></Canvas>
                    <HTrack><HThumb /></HTrack>
                  </CanvasColumn>
                  <VTrack><VThumb /></VTrack>
                </CanvasSplit>
              </CanvasRow>
              <EditorGap />
            </Workspace>
          </Editor>
          <StatusBar>
            <Label w={59.5} size={11.6} ml={21}>Slide 1 of 1</Label>
            <Label w={68} size={11.6} ml={18}>English (U.S.)</Label>
            <Spacer />
            <Label w={145.5} size={11.6}>Give Feedback to Microsoft</Label>
            <Slot $w={13} $ml={14.5}><Icon w={13} h={12} s="#555"><path d="M0 5.500 H13 M0 8.500 H13 M0 11.300 H9 M3.500 3.500 L6.500 .6 L9.500 3.500" /></Icon></Slot>
            <Label w={31.5} size={11.6} ml={3.5}>Notes</Label>
            <ViewButton><Icon w={13} h={12} s="#333"><path d="M.6 .6 H12.400 V11.400 H.6Z M2.800 .6 V11.400 M2.800 9 H12.400 M5 3 H10.200 V6.800 H5Z M6 5 H9" /></Icon></ViewButton>
            <Slot $w={13} $ml={10}><Icon w={13} h={12} s="#444"><path d="M.6 .6 H5 V4.500 H.6Z M8 .6 H12.400 V4.500 H8Z M.6 7.200 H5 V11.200 H.6Z M8 7.200 H12.400 V11.200 H8Z" /></Icon></Slot>
            <Slot $w={12} $ml={31}><Icon w={12} h={12} s="#444"><path d="M0 .6 H12 M1.500 .6 V6.400 H10.500 V.6 M4 3.500 H8 M6 6.400 V11 M3 11.400 H9" /></Icon></Slot>
            <Slot $w={11} $ml={28}><Icon w={11} h={11} s="#333"><path d="M0 5.500 H11" /></Icon></Slot>
            <Slot $w={94} $ml={18}><Icon w={94} h={16} s="#555"><path d="M0 7.500 H94" /><path d="M19 0 V15" strokeWidth="6" stroke="#605e5c" /></Icon></Slot>
            <Slot $w={11} $ml={17}><Icon w={11} h={11} s="#333"><path d="M0 5.500 H11 M5.500 0 V11" /></Icon></Slot>
            <Label w={23} size={11.6} ml={28.5}>90%</Label>
            <Slot $w={13} $ml={27}><Icon w={13} h={12} s="#555" sw={1}><circle cx="6.500" cy="6" r="3" /><path d="M4.800 1.800 L6.500 .3 L8.200 1.800Z M4.800 10.200 L6.500 11.700 L8.200 10.200Z M2 4.300 L.5 6 L2 7.700Z M11 4.300 L12.500 6 L11 7.700Z" /></Icon></Slot>
            <Slot $w={25.5} />
          </StatusBar>
        </Office>

        <SideBar>
          <SideSlot><Icon w={15} s={k} sw={1.3}><circle cx="6" cy="6" r="5.200" /><path d="M9.800 9.800 L14.500 14.500" /></Icon></SideSlot>
          <SideSlot><Icon w={15} s={k} sw={1.3}><path d="M5 1.500 C5.500 4.500 6 5 9 5.800 C6 6.500 5.500 7 5 10 C4.500 7 4 6.500 1 5.800 C4 5 4.500 4.500 5 1.500Z M12.500 9.500 L14.500 11.700 L12.500 13.900 L10.500 11.700Z M7.500 10 L9 11.700 L7.500 13.300" /></Icon></SideSlot>
          <SideSlot><Icon w={16} s={k} sw={1.3}><path d="M8.800 1.200 L14 .8 C15 .8 15.400 1.500 15.300 2.500 L15 7.500 L7.500 15 C7 15.400 6.300 15.400 5.800 15 L1 10.200 C.5 9.700 .5 9 1 8.500Z" /><circle cx="11.500" cy="4.500" r=".8" fill={k} /></Icon></SideSlot>
          <SideSlot><Icon w={18} h={14} s={k} sw={1.3}><path d="M6 3 V1.500 C6 .8 6.300 .6 7 .6 H11 C11.700 .6 12 .8 12 1.500 V3 M1.500 3.500 H16.500 C17.300 3.500 17.300 4 17.300 7.500 H.7 C.7 4 .7 3.500 1.500 3.500Z M1.800 7.500 V13.300 H16.200 V7.500" /><path d="M7.800 6.800 L9 6 L10.200 6.800 V8.200 L9 9 L7.800 8.200Z" fill={k} /></Icon></SideSlot>
          <SideSlot><Icon w={18} h={15} s={k} sw={1.2}><path d="M8.500 7 L8 5 C9 3.500 8 .7 5.600 .7 C3.300 .7 2.300 3.500 3.500 5 H2.800 M3.800 5 C4 8 3.500 9.500 1.500 11.500 C.5 13 .5 14.300 1.500 14.300 H10" /><circle cx="12.800" cy="9" r="4.700" fill="#ffb8d2" /><path d="M10 7 L15.500 11.500 M15.500 7 L10 11.500 M12.800 5 V6.500 M12.800 11.500 V13" strokeDasharray="1.500 1" /></Icon></SideSlot>
          <SideSlot><Icon w={16} h={19} s={k} sw={1.2}><path d="M10 1 L14.500 2.500 C15.200 2.800 15.400 3.200 15.400 4 V15 C15.400 16 15 16.300 14.500 16.500 L10 18.300 V1Z" /><path d="M10 .5 L2.500 3.300 C1 4 .6 4.500 .6 6 V13 C.6 14.500 2 14.800 3.500 14 C4 13.500 4.300 13 4.300 12 V6.500 L10 5Z" fill={k} /><path d="M4 15.500 H10 V18.300 L8.500 18.300 L4.500 16.300Z" fill={k} /></Icon></SideSlot>
          <SideSlot><Icon w={16} h={16} s={k} sw={1.3}><path d="M3 3 V1 H14.500 V7 M9.500 1 V5 H14.500 M3 12.500 V15.200 H15.300 V7.500 L10.500 11 M10 10 L15.300 14.500" /><rect x=".6" y="3" width="9.500" height="9.500" rx="1" fill={k} /><circle cx="5.300" cy="7.700" r="2.600" fill={k} stroke="#ffb8d2" /></Icon></SideSlot>
          <SideSlot><Icon w={16} h={16} s={k} sw={1.2}><path d="M8 .7 C5 .7 4.500 3 3.800 5 C2 6.500 .7 8 .9 10 C1 12 2 12.500 4 12.500 H12 C14 12.500 15 12 15.100 10 C15.300 8 14 6.500 12.200 5 C11.500 3 11 .7 8 .7Z M6.500 12.500 V14.500 C6.500 15.700 9.500 15.700 9.500 14.500 V12.500" /></Icon></SideSlot>
          <Slot $w={12} $mt={19}><Icon w={12} s={k}><path d="M6 0 V12 M0 6 H12" /></Icon></Slot>
          <Spacer />
          <SideRule />
          <Slot $w={28} $mt={17}><Icon w={16} h={12} s={k} sw={1.3}><rect x=".6" y=".6" width="14.800" height="10.800" rx="1.500" /><path d="M11 .6 V11.400 M3 6 H8 M6 3.800 L8.200 6 L6 8.200" /></Icon></Slot>
          <Slot $w={28} $mt={28}><Icon w={16} s={k} sw={1.2}><GearPath n={6} R={7.6} r={5.6} c={8} /><circle cx="8" cy="8" r="2.200" /></Icon></Slot>
          <Slot $w={28} $mt={15} />
        </SideBar>
      </Body>

      <TaskBar>
        <Slot $w={24} $ml={20}>
          <svg width="24" height="16" viewBox="0 0 24 16"><defs><linearGradient id="cl" x1="0" y1="0" x2="0" y2="1"><stop offset="0" stopColor="#7ea9ee" /><stop offset="1" stopColor="#cfe3fc" /></linearGradient></defs>
            <path d="M5.500 15.500 C-1.500 15.500 -1 6.500 5 7 C6.500 -1.500 16 -1.500 17.500 4.500 C25.500 4 25.500 15.500 18.500 15.500Z" fill="url(#cl)" stroke="#83a9e8" strokeWidth=".6" /><path d="M5 7.500 C8 6.500 10 8.500 10.500 10 C12 6 15 5 17.500 5" fill="none" stroke="#a9c6f5" /></svg>
        </Slot>
        <Stack $w={60} $ml={7.500}>
          <Label w={25} size={11.4}>26°C</Label>
          <Label w={38} size={11.4} color="#555">Cloudy</Label>
        </Stack>
        <Slot $w={24} $ml={287}>
          <svg width="23" height="23" viewBox="0 0 23 23"><defs><linearGradient id="wn" x1="0" y1="0" x2="1" y2="1"><stop offset="0" stopColor="#46c3f8" /><stop offset="1" stopColor="#0067c9" /></linearGradient></defs><path d="M0 0 H11 V11 H0Z M12 0 H23 V11 H12Z M0 12 H11 V23 H0Z M12 12 H23 V23 H12Z" fill="url(#wn)" /></svg>
        </Slot>
        <SearchPill>
          <Icon w={14} h={14} s="#222" sw={1.4}><circle cx="8.500" cy="5.500" r="4.800" /><path d="M5 9 L.6 13.500" /></Icon>
          <Label w={36} size={11.5} ml={5}>Search</Label>
        </SearchPill>
        <TaskApp $ml={7}>
          <svg width="24" height="22" viewBox="0 0 24 22"><rect x="0" y="6" width="18" height="16" rx="1" fill="#2d2d2d" /><rect x="6" y="0" width="18" height="16" rx="1" fill="#f4f4f4" /><rect x="6" y="6" width="12" height="10" fill="#bfbfbf" /></svg>
        </TaskApp>
        <TaskApp>
          <svg width="23" height="23" viewBox="0 0 23 23"><path d="M0 23 L1 16 C-3 7 4 0 11.500 0 C18 0 23 5 23 11.500 C23 18 18 23 11.500 23Z" fill="#6264c7" /><path d="M11 0 C18 0 23 5 23 11.500" stroke="#8f7fd8" strokeWidth="1.500" fill="none" /><rect x="5" y="7" width="9.500" height="9" rx="1" fill="#fff" /><path d="M15.500 10 L18 8 V15 L15.500 13Z" fill="#fff" /></svg>
        </TaskApp>
        <TaskApp $open>
          <svg width="24" height="22" viewBox="0 0 24 22"><path d="M0 1.500 C0 .5 .5 0 1.500 0 H8 L10.500 2.500 H24 V10 H0Z" fill="#dfa00c" /><path d="M0 5 H8.500 L11 2.500 H24 V21 H0Z" fill="#fdcb3e" /><path d="M4 21 V16.500 C4 15 5 14 6.500 14 H17.500 C19 14 20 15 20 16.500 V21Z" fill="#1482d0" /><path d="M7.500 17.800 H16.500" stroke="#0d5ea5" strokeWidth="1.500" /></svg>
        </TaskApp>
        <TaskApp>
          <svg width="23" height="23" viewBox="0 0 23 23"><path d="M6 5 V2 C6 1 6.500 .8 7.300 .8 H15.700 C16.500 .8 17 1 17 2 V5" fill="none" stroke="#28b3ee" strokeWidth="1.600" /><path d="M0 4.500 H23 V19 C23 21.500 21.500 23 19 23 H4 C1.500 23 0 21.500 0 19Z" fill="#174f8c" /><path d="M7 9 H11 V13 H7Z" fill="#f25022" /><path d="M12 9 H16 V13 H12Z" fill="#7fba00" /><path d="M7 14 H11 V18 H7Z" fill="#00a4ef" /><path d="M12 14 H16 V18 H12Z" fill="#ffb900" /></svg>
        </TaskApp>
        <TaskApp>
          <svg width="24" height="24" viewBox="0 0 24 24"><defs><linearGradient id="ff" x1="1" y1="0" x2="0" y2="1"><stop offset="0" stopColor="#ffe226" /><stop offset=".5" stopColor="#ff8a16" /><stop offset="1" stopColor="#f0206e" /></linearGradient></defs><path d="M15 .5 C17 2 19 3 19.500 4 C22 6 23.500 9 23 13 C22 20 17 23.500 12 23.500 C5 23.500 .5 18 .8 12 C.9 8 2.500 5 4 3.500 L5 6 C8 4.500 12 5 15 5Z" fill="url(#ff)" /><circle cx="12.500" cy="12" r="5.500" fill="#3b55dd" /><path d="M12 4 C17 3 20 9 18 14 C17 9 15 9 12.500 9 C11 9 9 8 12 4Z" fill="#198cf0" /><path d="M14 1 C20 4 23 9 21.500 14 C20 19 17 20 14 19 C19 15 19 9 15 6Z" fill="#ffd72a" /><path d="M3 7 C5 5.500 8 6 9.500 8 L13 9.500 C12 11.500 9 11 9.500 13 C10 15.500 14 15.500 16 14 C14 19 6 18 5 12Z" fill="#ff7a2d" /></svg>
        </TaskApp>
        <TaskApp>
          <svg width="24" height="21" viewBox="0 0 24 21" fill="#000"><path d="M6 0 L12 3.700 L6 7.400 L0 3.700Z M18 0 L24 3.700 L18 7.400 L12 3.700Z M6 7.800 L12 11.500 L6 15.200 L0 11.500Z M18 7.800 L24 11.500 L18 15.200 L12 11.500Z M12 12.700 L17.500 16.200 L12 20.500 L6.500 16.200Z" /></svg>
        </TaskApp>
        <TaskApp>
          <svg width="24" height="24" viewBox="0 0 24 24"><rect width="24" height="24" fill="#fff" /><text x="1" y="9.500" fontSize="6.300" fontWeight="800" textLength="22" lengthAdjust="spacingAndGlyphs" fill="#111" fontFamily="Open Sans, sans-serif">amazon</text><path d="M6 10.500 C9.500 12 14.500 12 17.500 10.500" stroke="#f79a1c" fill="none" /><path d="M2 14 H5.500 L8 23 H22 M6.500 16 H23.500 V22.500 H8" fill="none" stroke="#2f7fb5" strokeWidth="1.200" /><path d="M7 19.300 H23.500 M9 16 L14 22 M13 16 L18 22 M17 16 L22 22 M12 16 L9 21 M16 16 L12 22 M20 16 L16 22" stroke="#2f7fb5" strokeWidth=".9" /></svg>
        </TaskApp>
        <TaskApp $active>
          <svg width="24" height="24" viewBox="0 0 24 24"><defs><linearGradient id="eg" x1="0" y1=".3" x2="1" y2=".3"><stop offset="0" stopColor="#1ba0e2" /><stop offset=".6" stopColor="#2cc3cd" /><stop offset="1" stopColor="#62d66a" /></linearGradient></defs><path d="M0 12 C0 4 6 0 12 0 C19 0 24 5 24 10.500 C24 15 20.500 17 17.500 17 C14.500 17 13.500 15.500 14.500 14 C16 12 14.500 8 10.500 8 C5 8 0 10 0 12Z" fill="url(#eg)" /><path d="M0 12 C.5 7.500 6 6 10.500 8 C8 9.500 7.500 13 9.500 16 C12 20 17.500 21 22 18 C19.500 22.500 15.500 24 12 24 C5.500 24 0 19 0 12Z" fill="#1368b8" /><path d="M0 12 C.5 7.500 6 6 10.500 8 C5.500 9.500 4.500 16 7.500 20 L9.500 23.800 C4 23 0 18 0 12Z" fill="#1b86da" /></svg>
        </TaskApp>
        <TaskApp $open>
          <svg width="21" height="23" viewBox="0 0 21 23"><path d="M9 0 L3 3.500 C1 4.700 .5 6 .5 8 V15.500 L6.500 12 V9.500 C6.500 8 7 7.500 8.500 6.500 L13.500 3.500Z" fill="#4f86dd" /><path d="M9 0 C11 0 12 .3 13.500 1.300 L19 4.500 C20.500 5.500 21 7 21 8.500 V15 L14.500 11.500 V9 L8.500 5Z" fill="#3552b5" /><path d="M21 15 C20.700 17.500 19 18.500 17.500 19.400 L13 22 C10.500 23.300 9 22.500 7 21.300 L6 17 L14.500 14 V11.500Z" fill="#b8a4ec" /><path d="M.5 15.500 L6.500 12 C6.500 14 7 15 8.500 15.800 L12 17.500 L7.500 21.500 L2.500 18.700 C1 17.700 .5 17 .5 15.500Z" fill="#8c52c8" /></svg>
        </TaskApp>
        <TaskApp $open>
          <svg width="24" height="23" viewBox="0 0 24 23"><path d="M2.500 5 L7.500 20 L12.500 6.500 L15.500 20 L21 8" fill="none" stroke="#f33a22" strokeWidth="4.200" strokeLinejoin="bevel" /><path d="M0 5 H12.500 V8 H1Z" fill="#f33a22" /><path d="M12 8 L15.500 20" stroke="#ff7043" strokeWidth="4" /><circle cx="21.500" cy="3.500" r="5" fill="#4a84ef" /><text x="18.800" y="6" fontSize="6" fontWeight="700" fill="#fff" fontFamily="Open Sans, sans-serif">W</text></svg>
        </TaskApp>
        <Spacer />
        <Slot $w={12}><Icon w={12} h={7} s="#222" sw={1.3}><path d="M.5 6.500 L6 1 L11.500 6.500" /></Icon></Slot>
        <Slot $w={16} $ml={10}><Icon w={16} h={17} s="#222" sw={1.2}><path d="M1 7 C1.500 -.5 12 -1 14.300 5 M14.800 .5 V5.300 H10 M8 16 C5 16 2.500 14.500 1.300 12 M1 16.500 V11.700 H5.800" /><circle cx="12" cy="12.500" r="4" fill="#f7940d" stroke="none" /></Icon></Slot>
        <Stack $w={24} $ml={14.500} $align="center">
          <Label w={24} size={11.4}>ENG</Label>
          <Label w={15} size={11.4}>US</Label>
        </Stack>
        <Slot $w={16} $ml={18}><Icon w={16} h={13} s="#222" sw={1.1}><path d="M.4 5 C4.500 -.5 11.500 -.5 15.600 5 M2.700 7 C5.500 3.300 10.500 3.300 13.300 7 M5 9 C6.500 7 9.500 7 11 9" /><circle cx="8" cy="11" r="1.500" fill="#222" stroke="none" /></Icon></Slot>
        <Slot $w={16} $ml={8}><Icon w={16} h={13} s="#222" sw={1.1}><path d="M.6 4.500 H3 L6.500 1 V12 L3 8.500 H.6Z M8.500 4.500 C9.500 5.500 9.500 7.500 8.500 8.500 M10.700 2.800 C12.500 4.800 12.500 8.200 10.700 10.200 M13 .8 C16 3.500 16 9.500 13 12.200" /></Icon></Slot>
        <Slot $w={16} $ml={8}><Icon w={16} h={13} s="#222" sw={1}><path d="M8 2.800 H13.800 V11 H3.500 V7.500 M3.500 6 V7.500" /><path d="M7.500 5 H12 V9 H5.500 V7.500Z M1 2 H6 V4 C6 5.500 5 6 3.500 6 C2 6 1 5.500 1 4Z" fill="#222" /><path d="M2.300 0 V2 M4.800 0 V2 M15.400 5.500 V8.500" /></Icon></Slot>
        <Stack $w={60} $ml={13} $align="flex-end">
          <Label w={43} size={11.4}>7:38 pm</Label>
          <Label w={59} size={11.4}>16/12/2022</Label>
        </Stack>
        <Badge>13</Badge>
        <Slot $w={18} />
      </TaskBar>

      <Watermark>
        <Label w={157} size={19}>Activate Windows</Label>
        <Label w={236} size={13.8}>Go to Settings to activate Windows.</Label>
      </Watermark>
    </Page>
  );
}
